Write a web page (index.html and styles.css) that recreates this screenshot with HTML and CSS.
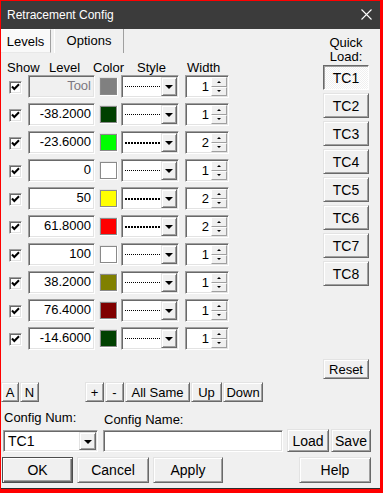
FILE: index.html
```html
<!DOCTYPE html>
<html>
<head>
<meta charset="utf-8">
<link rel="stylesheet" href="styles.css">
</head>
<body>
<div class="window">
  <div class="titlebar">
    <span class="title">Retracement Config</span>
    <svg class="close" width="11" height="11" viewBox="0 0 11 11"><path d="M0.5 0.5 L10.5 10.5 M10.5 0.5 L0.5 10.5" stroke="#fff" stroke-width="1.1" fill="none"/></svg>
  </div>
  <div class="top">
    <div class="left">
      <div class="tabs">
        <div class="tab tab-levels">Levels</div>
        <div class="tab tab-options">Options</div>
      </div>
      <div class="headers">
        <span class="h h-show">Show</span><span class="h h-level">Level</span><span class="h h-color">Color</span><span class="h h-style">Style</span><span class="h">Width</span>
      </div>
      <div class="rows">
        <div class="row">
          <div class="chk"><svg width="9" height="9" viewBox="0 0 9 9"><path d="M1 3.5 L3.3 6 L8 1.2" stroke="#000" stroke-width="2" fill="none"/></svg></div>
          <div class="field num disabled">Tool</div>
          <div class="swatch c-gray"></div>
          <div class="field style"><span class="line l1"></span><span class="drop"><i class="tri"></i></span></div>
          <div class="field spin"><span class="sv">1</span><span class="arrows"><span class="ar"><i class="up"></i></span><span class="ar"><i class="dn"></i></span></span></div>
        </div>
        <div class="row">
          <div class="chk"><svg width="9" height="9" viewBox="0 0 9 9"><path d="M1 3.5 L3.3 6 L8 1.2" stroke="#000" stroke-width="2" fill="none"/></svg></div>
          <div class="field num">-38.2000</div>
          <div class="swatch c-dkgreen"></div>
          <div class="field style"><span class="line l1"></span><span class="drop"><i class="tri"></i></span></div>
          <div class="field spin"><span class="sv">1</span><span class="arrows"><span class="ar"><i class="up"></i></span><span class="ar"><i class="dn"></i></span></span></div>
        </div>
        <div class="row">
          <div class="chk"><svg width="9" height="9" viewBox="0 0 9 9"><path d="M1 3.5 L3.3 6 L8 1.2" stroke="#000" stroke-width="2" fill="none"/></svg></div>
          <div class="field num">-23.6000</div>
          <div class="swatch c-lime"></div>
          <div class="field style"><span class="line l2"></span><span class="drop"><i class="tri"></i></span></div>
          <div class="field spin"><span class="sv">2</span><span class="arrows"><span class="ar"><i class="up"></i></span><span class="ar"><i class="dn"></i></span></span></div>
        </div>
        <div class="row">
          <div class="chk"><svg width="9" height="9" viewBox="0 0 9 9"><path d="M1 3.5 L3.3 6 L8 1.2" stroke="#000" stroke-width="2" fill="none"/></svg></div>
          <div class="field num">0</div>
          <div class="swatch c-white"></div>
          <div class="field style"><span class="line l1"></span><span class="drop"><i class="tri"></i></span></div>
          <div class="field spin"><span class="sv">1</span><span class="arrows"><span class="ar"><i class="up"></i></span><span class="ar"><i class="dn"></i></span></span></div>
        </div>
        <div class="row">
          <div class="chk"><svg width="9" height="9" viewBox="0 0 9 9"><path d="M1 3.5 L3.3 6 L8 1.2" stroke="#000" stroke-width="2" fill="none"/></svg></div>
          <div class="field num">50</div>
          <div class="swatch c-yellow"></div>
          <div class="field style"><span class="line l2"></span><span class="drop"><i class="tri"></i></span></div>
          <div class="field spin"><span class="sv">2</span><span class="arrows"><span class="ar"><i class="up"></i></span><span class="ar"><i class="dn"></i></span></span></div>
        </div>
        <div class="row">
          <div class="chk"><svg width="9" height="9" viewBox="0 0 9 9"><path d="M1 3.5 L3.3 6 L8 1.2" stroke="#000" stroke-width="2" fill="none"/></svg></div>
          <div class="field num">61.8000</div>
          <div class="swatch c-red"></div>
          <div class="field style"><span class="line l2"></span><span class="drop"><i class="tri"></i></span></div>
          <div class="field spin"><span class="sv">2</span><span class="arrows"><span class="ar"><i class="up"></i></span><span class="ar"><i class="dn"></i></span></span></div>
        </div>
        <div class="row">
          <div class="chk"><svg width="9" height="9" viewBox="0 0 9 9"><path d="M1 3.5 L3.3 6 L8 1.2" stroke="#000" stroke-width="2" fill="none"/></svg></div>
          <div class="field num">100</div>
          <div class="swatch c-white"></div>
          <div class="field style"><span class="line l1"></span><span class="drop"><i class="tri"></i></span></div>
          <div class="field spin"><span class="sv">1</span><span class="arrows"><span class="ar"><i class="up"></i></span><span class="ar"><i class="dn"></i></span></span></div>
        </div>
        <div class="row">
          <div class="chk"><svg width="9" height="9" viewBox="0 0 9 9"><path d="M1 3.5 L3.3 6 L8 1.2" stroke="#000" stroke-width="2" fill="none"/></svg></div>
          <div class="field num">38.2000</div>
          <div class="swatch c-olive"></div>
          <div class="field style"><span class="line l1"></span><span class="drop"><i class="tri"></i></span></div>
          <div class="field spin"><span class="sv">1</span><span class="arrows"><span class="ar"><i class="up"></i></span><span class="ar"><i class="dn"></i></span></span></div>
        </div>
        <div class="row">
          <div class="chk"><svg width="9" height="9" viewBox="0 0 9 9"><path d="M1 3.5 L3.3 6 L8 1.2" stroke="#000" stroke-width="2" fill="none"/></svg></div>
          <div class="field num">76.4000</div>
          <div class="swatch c-maroon"></div>
          <div class="field style"><span class="line l1"></span><span class="drop"><i class="tri"></i></span></div>
          <div class="field spin"><span class="sv">1</span><span class="arrows"><span class="ar"><i class="up"></i></span><span class="ar"><i class="dn"></i></span></span></div>
        </div>
        <div class="row">
          <div class="chk"><svg width="9" height="9" viewBox="0 0 9 9"><path d="M1 3.5 L3.3 6 L8 1.2" stroke="#000" stroke-width="2" fill="none"/></svg></div>
          <div class="field num">-14.6000</div>
          <div class="swatch c-dkgreen"></div>
          <div class="field style"><span class="line l1"></span><span class="drop"><i class="tri"></i></span></div>
          <div class="field spin"><span class="sv">1</span><span class="arrows"><span class="ar"><i class="up"></i></span><span class="ar"><i class="dn"></i></span></span></div>
        </div>
      </div>
    </div>
    <div class="quick">
      <div class="ql-label">Quick<br>Load:</div>
      <div class="btn tc pressed">TC1</div>
      <div class="btn tc">TC2</div>
      <div class="btn tc">TC3</div>
      <div class="btn tc">TC4</div>
      <div class="btn tc">TC5</div>
      <div class="btn tc">TC6</div>
      <div class="btn tc">TC7</div>
      <div class="btn tc">TC8</div>
      <div class="btn reset">Reset</div>
    </div>
  </div>
  <div class="toolrow">
    <div class="btn b-a">A</div>
    <div class="btn b-n">N</div>
    <div class="btn b-plus">+</div>
    <div class="btn b-minus">-</div>
    <div class="btn b-all">All Same</div>
    <div class="btn b-up">Up</div>
    <div class="btn b-down">Down</div>
  </div>
  <div class="labels">
    <span class="lbl-num">Config Num:</span>
    <span class="lbl-name">Config Name:</span>
  </div>
  <div class="inputs">
    <div class="field combo"><span class="combo-text">TC1</span><span class="drop"><i class="tri"></i></span></div>
    <div class="field namefield"></div>
    <div class="btn b-load">Load</div>
    <div class="btn b-save">Save</div>
  </div>
  <div class="actions">
    <div class="btn default b-ok">OK</div>
    <div class="btn b-cancel">Cancel</div>
    <div class="btn b-apply">Apply</div>
    <div class="btn b-help">Help</div>
  </div>
</div>
</body>
</html>
```
FILE: styles.css
```css
* { box-sizing: border-box; margin: 0; padding: 0; }
html, body { margin: 0; background: #f0f0f0; }
body {
  font-family: "Liberation Sans", Arial, sans-serif;
  font-size: 13px;
  color: #000;
}
.window {
  width: 383px;
  height: 493px;
  border: 1px solid #ff0000;
  border-right-width: 3px;
  border-bottom-width: 4px;
  background: #f0f0f0;
  box-shadow: inset 0 -1px 0 #2d2d2d;
  display: flex;
  flex-direction: column;
  overflow: hidden;
}
.titlebar {
  height: 28px;
  flex: none;
  background: #3b3b3b;
  color: #fff;
  display: flex;
  align-items: center;
  padding-left: 6px;
  padding-right: 8px;
  padding-bottom: 1px;
  font-size: 12px;
}
.close { margin-left: auto; }

.top { display: flex; flex: none; }
.left { width: 322px; }
.tabs { height: 24px; display: flex; }
.tab {
  display: flex;
  align-items: center;
  justify-content: center;
  height: 24px;
}
.tab-levels {
  width: 50px;
  background: #f9f9f9;
  border-top: 1px solid #fff;
  border-right: 1px solid #a0a0a0;
  border-bottom: 1px solid #e8e8e8;
  padding-top: 1px;
}
.tab-options {
  width: 70px;
  margin-left: 3px;
  border-left: 1px solid #fff;
  border-right: 1px solid #a0a0a0;
  padding-bottom: 2px;
}
.headers {
  height: 22px;
  padding-top: 7px;
  padding-left: 6px;
  line-height: 15px;
  white-space: nowrap;
}
.h { display: inline-block; }
.h-show { width: 42px; }
.h-level { width: 44px; }
.h-color { width: 44px; }
.h-style { width: 50px; }

.rows { display: flex; flex-direction: column; gap: 5px; padding-left: 8px; }
.row {
  display: grid;
  grid-template-columns: 19px 71px 22px 64px 44px;
  height: 23px;
  align-items: start;
}

/* sunken 3D field */
.field {
  background: #fff;
  border: 1px solid;
  border-color: #a0a0a0 #fff #fff #a0a0a0;
  box-shadow: inset 1px 1px 0 #696969, inset -1px -1px 0 #e3e3e3;
}
.chk {
  width: 13px;
  height: 13px;
  margin-top: 6px;
  background: #fff;
  border: 1px solid;
  border-color: #a0a0a0 #fff #fff #a0a0a0;
  box-shadow: inset 1px 1px 0 #696969, inset -1px -1px 0 #e3e3e3;
  padding: 1px;
}
.chk svg { display: block; }

.num {
  width: 67px;
  height: 23px;
  text-align: right;
  padding-right: 3px;
  line-height: 20px;
  font-size: 13px;
}
.num.disabled { background: #f0f0f0; color: #7c7780; }

.swatch {
  width: 19px;
  height: 19px;
  margin-top: 2px;
  border: 1px solid;
  border-color: #e3e3e3 #fff #fff #e3e3e3;
  box-shadow: inset 0 0 0 1px #8a8a8a;
}
.c-gray { background-color: #808080; }
.c-dkgreen { background-color: #004000; }
.c-lime { background-color: #00ff00; }
.c-white { background-color: #ffffff; }
.c-yellow { background-color: #ffff00; }
.c-red { background-color: #ff0000; }
.c-olive { background-color: #808000; }
.c-maroon { background-color: #800000; }

.style {
  width: 58px;
  height: 23px;
  display: flex;
  align-items: center;
  padding: 1px;
}
.line { display: block; width: 37px; margin-left: 2px; }
.l1 { height: 1px; background: repeating-linear-gradient(90deg, #000 0 1px, transparent 1px 2px); }
.l2 { height: 2px; background: repeating-linear-gradient(90deg, #000 0 2px, transparent 2px 3px); }
.drop {
  margin-left: auto;
  width: 17px;
  height: 19px;
  background: #f0f0f0;
  border: 1px solid;
  border-color: #e3e3e3 #696969 #696969 #e3e3e3;
  box-shadow: inset 1px 1px 0 #fff, inset -1px -1px 0 #a0a0a0;
  display: flex;
  align-items: center;
  justify-content: center;
}
.tri {
  display: block;
  width: 0;
  height: 0;
  border-left: 4px solid transparent;
  border-right: 4px solid transparent;
  border-top: 4px solid #000;
  margin-top: 1px;
}

.spin {
  width: 44px;
  height: 23px;
  display: flex;
  align-items: stretch;
  padding: 1px;
}
.sv { flex: 1; text-align: right; padding-right: 2px; line-height: 19px; }
.arrows { width: 16px; display: flex; flex-direction: column; }
.ar {
  flex: 1;
  background: #f0f0f0;
  border: 1px solid;
  border-color: #fff #a0a0a0 #a0a0a0 #fff;
  display: flex;
  align-items: center;
  justify-content: center;
}
.up, .dn {
  display: block;
  width: 0;
  height: 0;
  border-left: 2px solid transparent;
  border-right: 2px solid transparent;
}
.up { border-bottom: 2px solid #000; }
.dn { border-top: 2px solid #000; }

/* raised buttons */
.btn {
  background: #f0f0f0;
  border: 1px solid;
  border-color: #e3e3e3 #696969 #696969 #e3e3e3;
  box-shadow: inset 1px 1px 0 #fff, inset -1px -1px 0 #a0a0a0;
  display: flex;
  align-items: center;
  justify-content: center;
  white-space: nowrap;
}
.btn.pressed {
  border-color: #696969 #fff #fff #696969;
  box-shadow: inset 1px 1px 0 #a0a0a0;
  background: repeating-conic-gradient(#ffffff 0 25%, #f0f0f0 0 50%) 0 0 / 2px 2px;
  font-size: 14px;
}
.btn.default {
  border: 1px solid #4d4d4d;
  box-shadow: inset 1px 1px 0 #fff, inset -1px -1px 0 #696969, inset -2px -2px 0 #a0a0a0;
}

.quick {
  width: 46px;
  display: flex;
  flex-direction: column;
  padding-top: 7px;
}
.ql-label { text-align: center; line-height: 14px; margin-bottom: 1px; font-size: 13px; }
.tc { height: 25px; margin-bottom: 3px; font-size: 14px; }
.reset { height: 20px; margin-top: 70px; }

.toolrow {
  display: flex;
  gap: 1px;
  height: 20px;
  margin-top: 3px;
  flex: none;
}
.b-a { width: 18px; }
.b-n { width: 19px; }
.b-plus { width: 19px; margin-left: 45px; }
.b-minus { width: 19px; }
.b-all { width: 65px; }
.b-up { width: 31px; }
.b-down { width: 40px; }

.labels {
  display: flex;
  height: 27px;
  line-height: 15px;
  flex: none;
}
.lbl-num { margin-left: 3px; margin-top: 8px; width: 100px; }
.lbl-name { margin-top: 10px; }

.inputs {
  display: flex;
  height: 23px;
  flex: none;
  align-items: flex-start;
}
.combo {
  width: 95px;
  height: 22px;
  margin-top: 1px;
  margin-left: 2px;
  display: flex;
  align-items: center;
  padding: 1px;
}
.combo-text { padding-left: 3px; font-size: 14px; }
.combo .drop { height: 18px; }
.namefield { width: 180px; height: 22px; margin-top: 1px; margin-left: 5px; }
.b-load { width: 42px; height: 23px; margin-left: 4px; font-size: 14px; }
.b-save { width: 40px; height: 23px; margin-left: 2px; font-size: 14px; }

.actions {
  display: flex;
  height: 26px;
  margin-top: 5px;
  flex: none;
  font-size: 14px;
}
.b-ok { width: 71px; margin-left: 1px; }
.b-cancel { width: 72px; margin-left: 4px; }
.b-apply { width: 70px; margin-left: 4px; }
.b-help { width: 72px; margin-left: 76px; }
```
